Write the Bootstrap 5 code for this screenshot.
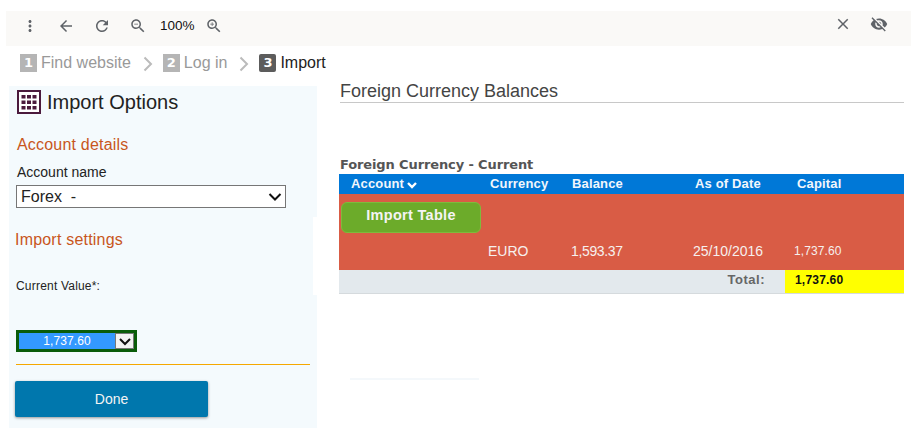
<!DOCTYPE html>
<html lang="en">
<head>
  <meta charset="UTF-8" />
  <meta name="viewport" content="width=device-width, initial-scale=1.0"/>
  <title>Import</title>
  <link href="https://cdn.jsdelivr.net/npm/bootstrap@5.3.0/dist/css/bootstrap.min.css" rel="stylesheet"/>
  <style>
    body {
      margin: 0;
      background: #fff;
      font-family: "Liberation Sans", Arial, sans-serif;
      color: #222;
      overflow: hidden;
    }

    /* viewer toolbar */
    .viewer-bar {
      height: 35px;
      margin: 11px 0 0 6px;
      padding: 0 0 5px 15px;
      background: #faf9f7;
      color: #5f6368;
    }
    .viewer-bar svg { width: 18px; height: 18px; fill: #5f6368; display: block; }
    .tool-gap { margin-right: 18px; }
    .zoom-text { font-size: 13.500px; color: #111; width: 37px; margin: 0 8px 0 13px; }
    .tool-close { margin: 0 18px 5px auto; }
    .tool-eye { margin: 0 23px 5px 0; }

    /* steps */
    .step-row { height: 35px; padding: 6px 0 0 20px; font-size: 16px; color: #999; line-height: 22px; }
    .step-num {
      width: 17px; height: 18px; margin-right: 4px;
      background: #b5b5b5; color: #fff;
      font: bold 13px/18px "DejaVu Sans", sans-serif; text-align: center;
    }
    .step-now { color: #222; }
    .step-now .step-num { background: #5c5c5c; border-radius: 2px; }
    .step-sep { width: 10px; height: 16px; margin: 0 10px 0 12px; fill: none; stroke: #bbb; stroke-width: 2; }

    /* left panel */
    .side-col { width: 308px; margin: 5px 0 0 9px; }
    .side-top { height: 131px; background: #f4fafd; padding: 4px 0 0 8px; }
    .side-mid { height: 78px; width: 304px; background: #f4fafd; padding: 13px 0 0 6px; }
    .side-end { height: 133px; background: #f4fafd; padding: 35px 0 0 6px; }
    .side-title { font-size: 20px; line-height: 24px; color: #222; font-weight: 400; margin: 0; }
    .side-title svg { width: 24px; height: 24px; margin-right: 6px; display: block; }
    .side-head { font-size: 16px; line-height: 20px; color: #c8561c; font-weight: 400; margin: 0; letter-spacing: .2px; }
    .side-top .side-head { margin-top: 21px; }
    .acct-label { font-size: 14px; line-height: 18px; margin: 8px 0 4px; color: #222; }
    .acct-select.form-select {
      width: 270px; height: 23px; min-height: 0;
      padding: 0 20px 0 4px;
      margin-left: -1px;
      font-size: 16px; line-height: 21px; color: #222;
      border: 1px solid #767676; border-radius: 0;
      background-position: right 3px center;
      background-size: 14px 10px;
      background-image: url("data:image/svg+xml,%3csvg xmlns='http://www.w3.org/2000/svg' viewBox='0 0 14 10'%3e%3cpath fill='none' stroke='%23111' stroke-width='2' d='M1.5 2 7 7.5 12.500 2'/%3e%3c/svg%3e");
    }
    .value-label { font-size: 12px; line-height: 16px; margin: 28px 0 0 1px; color: #222; letter-spacing: .2px; }
    .value-pick {
      width: 121px; height: 22px;
      margin-left: 1px;
      border: 3px solid #0a5c0a;
      background: #3399ff; color: #fff;
      font-size: 12px; line-height: 16px;
    }
    .value-text { flex: 1; text-align: center; letter-spacing: .1px; }
    .value-arrow {
      width: 19px; background: #f3f3f3; border: 1px solid #777;
    }
    .value-arrow svg { width: 12px; height: 9px; fill: none; stroke: #111; stroke-width: 2; }
    .side-rule { height: 1px; background: #f5a800; width: 294px; margin: 12px 0 16px 1px; }
    .done-btn.btn {
      width: 193px; height: 36px; padding: 0;
      background: #0077ad; border: 0; border-radius: 2px;
      color: #f4f4f4; font-size: 14px;
      box-shadow: 0 1px 3px rgba(0,0,0,.4);
    }

    /* right side */
    .main-col { width: 565px; margin-left: 22px; }
    .main-title {
      font-size: 18px; line-height: 21px; font-weight: 400; color: #444;
      margin: 0 0 0 1px; padding-bottom: 0; height: 22px;
      border-bottom: 1px solid #c8c8c8;
    }
    .tbl-title {
      font: bold 13px/16px "DejaVu Sans", Verdana, sans-serif;
      color: #555; margin: 54px 0 1px 1px; letter-spacing: -.12px;
    }
    .bal-table { width: 565px; border-collapse: collapse; table-layout: fixed; font-size: 14px; }
    .bal-table th {
      height: 20px; padding: 0; background: #0078d7; color: #f2f6fc;
      font-size: 13px; font-weight: 700; line-height: 16px; letter-spacing: .15px;
    }
    .bal-table th svg { width: 10px; height: 8px; fill: none; stroke: #fff; stroke-width: 2.400; margin-left: 3px; }
    .bal-table td { background: #d95c45; color: #f6f0ee; padding: 0; }
    .col-acct { width: 149px; }
    .col-curr { width: 83px; }
    .col-bal { width: 122px; }
    .col-date { width: 92px; }
    .col-cap { width: 119px; }
    .bal-table th.head-acct, .bal-table th.head-cap { padding-left: 12px; }
    .bal-table th.head-curr, .bal-table th.head-date { padding-left: 2px; }
    .bal-table th.head-bal { padding-left: 1px; }
    .row-btn td { height: 44px; }
    .row-val td { height: 32px; padding-bottom: 6px; }
    .bal-cell { letter-spacing: -.35px; }
    .bal-table .row-total td {
      height: 23px; background: #e3e9ed; color: #666;
      border-bottom: 1px solid #d5dadd;
      font-weight: 700; font-size: 13px; text-align: right; padding: 0 20px 3px 0;
      letter-spacing: .5px;
    }
    .bal-table .row-total .sum-cell {
      background: #ff0; color: #111; font-size: 12px; text-align: left; padding: 0 0 3px 10px;
      letter-spacing: .2px;
    }
    .bal-table td.cap-small { font-size: 12px; letter-spacing: .1px; padding-left: 9px; }
    .import-btn.btn {
      width: 140px; height: 31px; padding: 0 0 2px; margin: 2px 0 0 2px; display: block;
      background: #6cab2a; border: 1px solid #7dbb3c; border-radius: 6px;
      color: #f4f4f4; font-size: 14.500px; font-weight: 700; letter-spacing: .3px;
    }
    .faint-line { width: 129px; height: 2px; background: #f4f8fb; margin: 84px 0 0 11px; }
  </style>
</head>
<body>

  <!-- viewer toolbar -->
  <div class="viewer-bar d-flex align-items-center">
    <svg class="tool-gap" viewBox="0 0 24 24"><path d="M12 8c1.100 0 2-.9 2-2s-.9-2-2-2-2 .9-2 2 .9 2 2 2zm0 2c-1.100 0-2 .9-2 2s.9 2 2 2 2-.9 2-2-.9-2-2-2zm0 6c-1.100 0-2 .9-2 2s.9 2 2 2 2-.9 2-2-.9-2-2-2z"/></svg>
    <svg class="tool-gap" viewBox="0 0 24 24"><path d="M20 11H7.830l5.590-5.590L12 4l-8 8 8 8 1.410-1.410L7.830 13H20v-2z"/></svg>
    <svg class="tool-gap" viewBox="0 0 24 24"><path d="M17.650 6.350C16.200 4.900 14.210 4 12 4c-4.420 0-7.990 3.580-7.990 8s3.570 8 7.990 8c3.730 0 6.840-2.550 7.730-6h-2.080c-.82 2.330-3.040 4-5.650 4-3.310 0-6-2.690-6-6s2.690-6 6-6c1.660 0 3.140.69 4.220 1.780L13 11h7V4l-2.350 2.350z"/></svg>
    <svg viewBox="0 0 24 24"><path d="M15.500 14h-.79l-.28-.27C15.410 12.590 16 11.110 16 9.500 16 5.910 13.090 3 9.500 3S3 5.910 3 9.500 5.910 16 9.500 16c1.610 0 3.090-.59 4.230-1.570l.27.28v.79l5 4.990L20.490 19l-4.990-5zm-6 0C7.010 14 5 11.990 5 9.500S7.010 5 9.500 5 14 7.010 14 9.500 11.990 14 9.500 14zM7 9h5v1H7z"/></svg>
    <span class="zoom-text">100%</span>
    <svg viewBox="0 0 24 24"><path d="M15.500 14h-.79l-.28-.27C15.410 12.590 16 11.110 16 9.500 16 5.910 13.090 3 9.500 3S3 5.910 3 9.500 5.910 16 9.500 16c1.610 0 3.090-.59 4.230-1.570l.27.28v.79l5 4.990L20.490 19l-4.990-5zm-6 0C7.010 14 5 11.990 5 9.500S7.010 5 9.500 5 14 7.010 14 9.500 11.990 14 9.500 14zM12 10h-2v2H9v-2H7V9h2V7h1v2h2v1z"/></svg>
    <svg class="tool-close" viewBox="0 0 24 24"><path d="M19 6.410L17.590 5 12 10.590 6.410 5 5 6.410 10.590 12 5 17.590 6.410 19 12 13.410 17.590 19 19 17.590 13.410 12z"/></svg>
    <svg class="tool-eye" viewBox="0 0 24 24"><path d="M12 7c2.760 0 5 2.240 5 5 0 .65-.13 1.260-.36 1.830l2.920 2.920c1.510-1.260 2.700-2.890 3.430-4.750-1.730-4.390-6-7.500-11-7.500-1.400 0-2.740.25-3.980.7l2.160 2.160C10.740 7.130 11.350 7 12 7zM2 4.270l2.280 2.280.46.46C3.080 8.300 1.780 10.020 1 12c1.730 4.390 6 7.500 11 7.500 1.550 0 3.030-.3 4.380-.84l.42.42L19.730 22 21 20.730 3.270 3 2 4.270zM7.530 9.800l1.550 1.550c-.05.21-.08.43-.08.65 0 1.660 1.340 3 3 3 .22 0 .44-.03.65-.08l1.550 1.550c-.67.33-1.410.53-2.200.53-2.760 0-5-2.240-5-5 0-.79.2-1.530.53-2.200zm4.310-.78l3.150 3.150.02-.16c0-1.660-1.340-3-3-3l-.17.01z"/></svg>
  </div>

  <!-- steps -->
  <div class="step-row d-flex align-items-start">
    <span class="d-flex align-items-center"><span class="step-num">1</span>Find website</span>
    <svg class="step-sep mt-1" viewBox="0 0 10 16"><path d="M1.500 1.500 8 8l-6.500 6.500"/></svg>
    <span class="d-flex align-items-center"><span class="step-num">2</span>Log in</span>
    <svg class="step-sep mt-1" viewBox="0 0 10 16"><path d="M1.500 1.500 8 8l-6.500 6.500"/></svg>
    <span class="d-flex align-items-center step-now"><span class="step-num">3</span>Import</span>
  </div>

  <div class="d-flex align-items-start">
    <!-- left panel -->
    <div class="side-col">
      <div class="side-top">
        <h2 class="side-title d-flex align-items-center">
          <svg viewBox="0 0 24 24"><rect x="1" y="1" width="22" height="22" fill="#fff" stroke="#4b1a3d" stroke-width="2"/><path fill="#4b1a3d" d="M4.500 5h4v3.500h-4zM10 5h4v3.500h-4zM15.500 5h4v3.500h-4zM4.500 10.500h4V14h-4zM10 10.500h4V14h-4zM15.500 10.500h4V14h-4zM4.500 16h4v3.500h-4zM10 16h4v3.500h-4zM15.500 16h4v3.500h-4z"/></svg>
          Import Options
        </h2>
        <h3 class="side-head">Account details</h3>
        <p class="acct-label">Account name</p>
        <select class="form-select acct-select"><option>Forex&nbsp; -</option></select>
      </div>
      <div class="side-mid">
        <h3 class="side-head">Import settings</h3>
        <p class="value-label">Current Value*:</p>
      </div>
      <div class="side-end">
        <div class="value-pick d-flex">
          <span class="value-text">1,737.60</span>
          <span class="value-arrow d-flex align-items-center justify-content-center">
            <svg viewBox="0 0 12 9"><path d="M1 2l5 5 5-5"/></svg>
          </span>
        </div>
        <div class="side-rule"></div>
        <button class="btn done-btn" type="button">Done</button>
      </div>
    </div>

    <!-- right side -->
    <div class="main-col">
      <h1 class="main-title">Foreign Currency Balances</h1>
      <div class="tbl-title">Foreign Currency - Current</div>
      <table class="bal-table">
        <colgroup>
          <col class="col-acct"><col class="col-curr"><col class="col-bal"><col class="col-date"><col class="col-cap">
        </colgroup>
        <thead>
          <tr>
            <th class="head-acct">Account<svg viewBox="0 0 10 8"><path d="M1 2l4 4 4-4"/></svg></th>
            <th class="head-curr">Currency</th>
            <th class="head-bal">Balance</th>
            <th class="head-date">As of Date</th>
            <th class="head-cap">Capital</th>
          </tr>
        </thead>
        <tbody>
          <tr class="row-btn">
            <td colspan="5"><button class="btn import-btn" type="button">Import Table</button></td>
          </tr>
          <tr class="row-val">
            <td></td>
            <td>EURO</td>
            <td class="bal-cell">1,593.37</td>
            <td>25/10/2016</td>
            <td class="cap-small">1,737.60</td>
          </tr>
          <tr class="row-total">
            <td colspan="4">Total:</td>
            <td class="sum-cell">1,737.60</td>
          </tr>
        </tbody>
      </table>
      <div class="faint-line"></div>
    </div>
  </div>

</body>
</html>
